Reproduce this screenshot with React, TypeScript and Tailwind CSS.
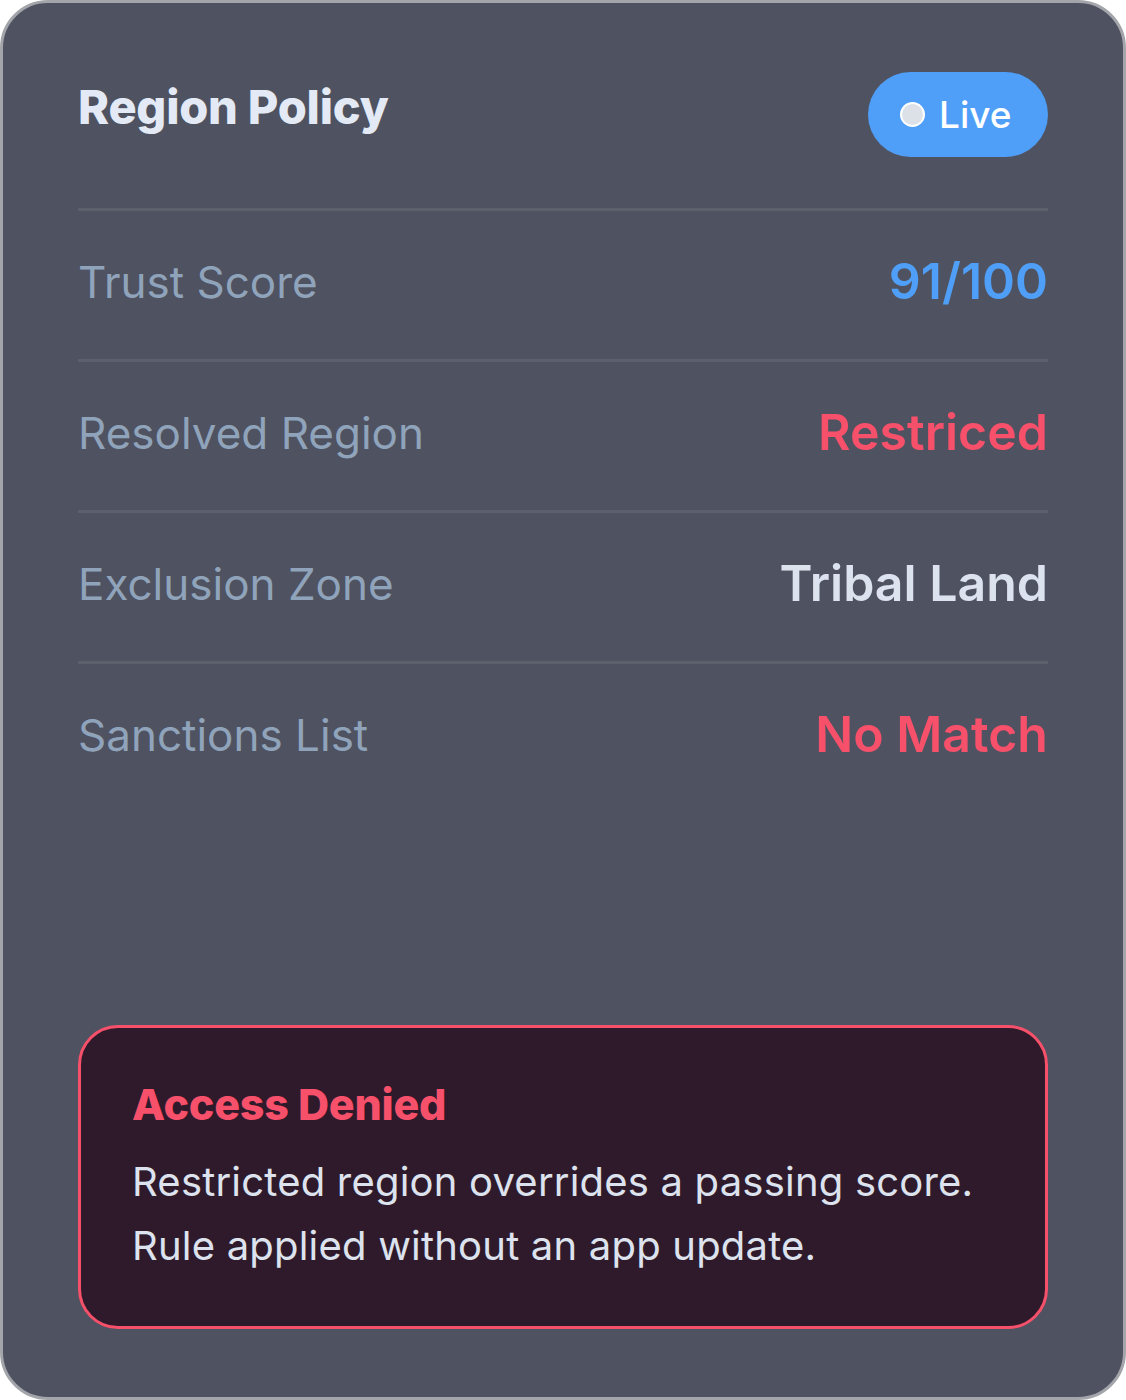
const rows = [
  { label: "Trust Score", value: "91/100", tone: "text-[#4f9ef8]" },
  { label: "Resolved Region", value: "Restriced", tone: "text-[#f6506a]" },
  { label: "Exclusion Zone", value: "Tribal Land", tone: "text-[#dde3ee]" },
  { label: "Sanctions List", value: "No Match", tone: "text-[#f6506a]" },
];

export default function App() {
  return (
    <div className="h-[1400px] w-[1126px] bg-white font-['Inter',sans-serif]">
      <div className="flex h-full flex-col rounded-[48px] border-[3px] border-[#a3a5ab] bg-[#4f5260] px-[75px] pt-[69px] pb-[68px]">
        {/* Header */}
        <div className="flex items-start justify-between pb-[51px]">
          <h1 className="mt-[9px] text-[47px] font-extrabold leading-[52px] tracking-[-0.005em] text-[#e3eaf5]">
            Region Policy
          </h1>
          <span className="flex h-[85px] w-[180px] items-center gap-[14px] rounded-full bg-[#4f9ef8] pl-[32px]">
            <span className="h-[25px] w-[25px] rounded-full border-2 border-white bg-[#dce1e8]" />
            <span className="text-[37px] font-medium text-white">Live</span>
          </span>
        </div>

        {/* Rows */}
        <div className="flex flex-col">
          {rows.map((r) => (
            <div
              key={r.label}
              className="flex h-[151px] items-center justify-between border-t-[3px] border-[#5c5f6c] pb-[7px]"
            >
              <span className="text-[44px] font-normal text-[#8fa3bb]">{r.label}</span>
              <span className={`text-[50px] font-semibold ${r.tone}`}>{r.value}</span>
            </div>
          ))}
        </div>

        {/* Alert */}
        <div className="mt-auto rounded-[40px] border-[3px] border-[#f6506a] bg-[#2f1a2b] px-[51px] pt-[50px] pb-[48px]">
          <h2 className="text-[43px] font-extrabold leading-[52px] tracking-[-0.005em] text-[#f6506a]">
            Access Denied
          </h2>
          <p className="mt-[20px] text-[40px] font-normal leading-[64px] tracking-[0.005em] text-[#dde3ee]">
            Restricted region overrides a passing score.
            <br />
            Rule applied without an app update.
          </p>
        </div>
      </div>
    </div>
  );
}
